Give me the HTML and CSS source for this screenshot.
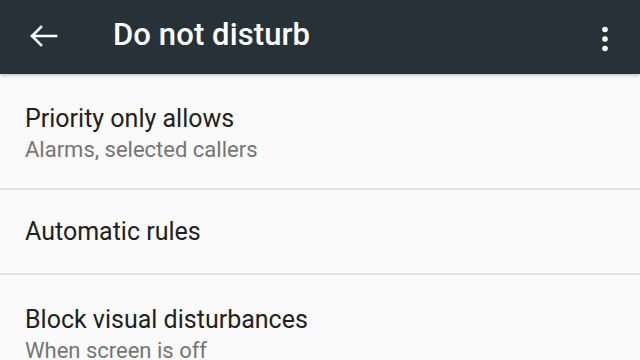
FILE: index.html
```html
<!DOCTYPE html>
<html>
<head>
<meta charset="utf-8">
<link rel="stylesheet" href="styles.css">
</head>
<body>
<div class="screen">
  <header class="toolbar">
    <svg class="back" width="40" height="40" viewBox="0 0 40 40">
      <path d="M8 15 H32 M17 6 L8 15 L17 24" fill="none" stroke="#ffffff" stroke-width="2.6" stroke-linecap="square" stroke-linejoin="miter"/>
    </svg>
    <h1 class="title">Do not disturb</h1>
    <svg class="more" width="12" height="30" viewBox="0 0 12 30">
      <circle cx="6" cy="5.5" r="2.8" fill="#ffffff"/>
      <circle cx="6" cy="15" r="2.8" fill="#ffffff"/>
      <circle cx="6" cy="24.5" r="2.8" fill="#ffffff"/>
    </svg>
  </header>
  <main class="list">
    <div class="item item-two">
      <div class="item-title">Priority only allows</div>
      <div class="item-summary">Alarms, selected callers</div>
    </div>
    <div class="item item-one">
      <div class="item-title">Automatic rules</div>
    </div>
    <div class="item item-two">
      <div class="item-title">Block visual disturbances</div>
      <div class="item-summary">When screen is off</div>
    </div>
  </main>
</div>
</body>
</html>
```

FILE: styles.css
```css
html, body {
  margin: 0;
  padding: 0;
}
body {
  width: 640px;
  height: 360px;
  overflow: hidden;
  background: #fafafa;
  font-family: Roboto, "Noto Sans", sans-serif;
}
.screen {
  width: 640px;
  height: 360px;
  display: flex;
  flex-direction: column;
}
.toolbar {
  flex: 0 0 74px;
  height: 74px;
  background: #263238;
  display: flex;
  align-items: center;
  padding: 0 0 5px 24px;
  box-sizing: border-box;
  box-shadow: 0 1px 4px rgba(0, 0, 0, 0.28);
  position: relative;
  z-index: 1;
}
.back {
  display: block;
  flex: 0 0 40px;
  margin-top: 13px;
}
.title {
  margin: 0 0 0 49px;
  font-size: 31px;
  font-weight: 500;
  color: #ffffff;
  flex: 1 1 auto;
  line-height: 36px;
  letter-spacing: 0.1px;
}
.more {
  display: block;
  margin-right: 29px;
  margin-top: 9px;
}
.list {
  flex: 1 1 auto;
  display: flex;
  flex-direction: column;
}
.item {
  padding: 0 25px;
  border-bottom: 2px solid #e2e2e2;
  display: flex;
  flex-direction: column;
  flex: 0 0 auto;
}
.item-two {
  padding-top: 30px;
  height: 114px;
  box-sizing: content-box;
  height: 61px;
  padding-bottom: 23px;
}
.item-one {
  padding-top: 27px;
  height: 30px;
  padding-bottom: 26px;
}
.item-title {
  font-size: 25px;
  line-height: 30px;
  color: #212121;
}
.item-summary {
  font-size: 22px;
  line-height: 30px;
  margin-top: 1px;
  color: #757575;
}
```
